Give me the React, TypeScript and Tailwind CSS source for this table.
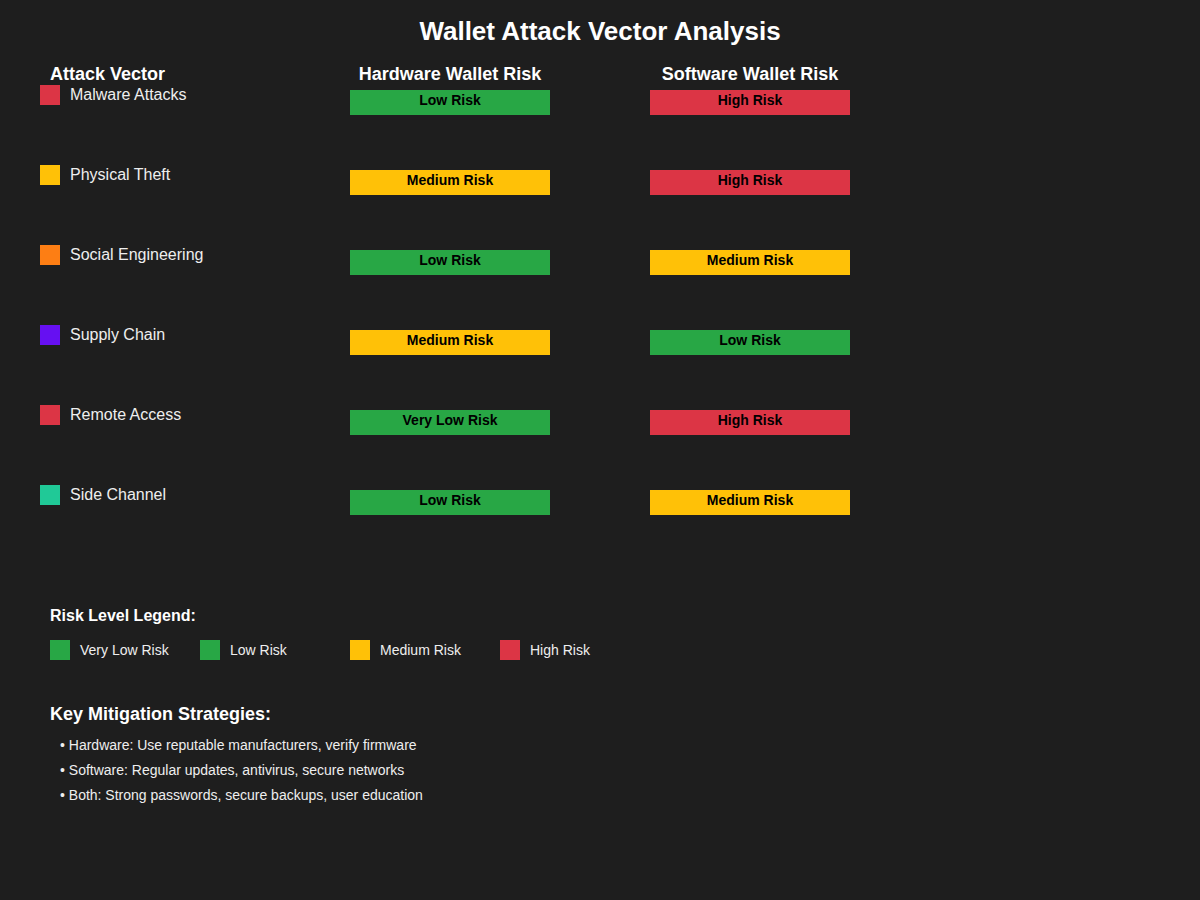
import React from 'react';

type Level = 'Very Low Risk' | 'Low Risk' | 'Medium Risk' | 'High Risk';

const levelBg: Record<Level, string> = {
  'Very Low Risk': 'bg-[#28a745]',
  'Low Risk': 'bg-[#28a745]',
  'Medium Risk': 'bg-[#ffc107]',
  'High Risk': 'bg-[#dc3545]',
};

const vectors: { name: string; color: string; hw: Level; sw: Level }[] = [
  { name: 'Malware Attacks', color: 'bg-[#dc3545]', hw: 'Low Risk', sw: 'High Risk' },
  { name: 'Physical Theft', color: 'bg-[#ffc107]', hw: 'Medium Risk', sw: 'High Risk' },
  { name: 'Social Engineering', color: 'bg-[#fd7e14]', hw: 'Low Risk', sw: 'Medium Risk' },
  { name: 'Supply Chain', color: 'bg-[#6610f2]', hw: 'Medium Risk', sw: 'Low Risk' },
  { name: 'Remote Access', color: 'bg-[#dc3545]', hw: 'Very Low Risk', sw: 'High Risk' },
  { name: 'Side Channel', color: 'bg-[#20c997]', hw: 'Low Risk', sw: 'Medium Risk' },
];

const legend: Level[] = ['Very Low Risk', 'Low Risk', 'Medium Risk', 'High Risk'];

const strategies = [
  '• Hardware: Use reputable manufacturers, verify firmware',
  '• Software: Regular updates, antivirus, secure networks',
  '• Both: Strong passwords, secure backups, user education',
];

const RiskBar: React.FC<{ level: Level }> = ({ level }) => (
  <div className={`mt-[5px] w-[200px] h-[25px] pt-[2px] text-center text-[14px] leading-[16px] font-bold text-black ${levelBg[level]}`}>
    {level}
  </div>
);

const App: React.FC = () => {
  return (
    <div className="min-h-[900px] w-[1200px] bg-[#1e1e1e] text-[#f0f0f0] font-['Liberation_Sans',Arial,sans-serif]">
      <h1 className="pt-[15px] text-center text-[26px] leading-[32px] font-bold text-white">
        Wallet Attack Vector Analysis
      </h1>

      <div className="px-[40px] mt-[17px]">
        {/* column headers */}
        <div className="flex h-[21px] text-[18px] leading-[20px] font-bold text-white">
          <div className="w-[310px] pl-[10px]">Attack Vector</div>
          <div className="w-[200px] text-center whitespace-nowrap">Hardware Wallet Risk</div>
          <div className="w-[100px]" />
          <div className="w-[200px] text-center whitespace-nowrap">Software Wallet Risk</div>
        </div>

        {vectors.map((v) => (
          <div key={v.name} className="flex items-start h-[80px]">
            <div className="w-[310px] h-[20px] flex items-center gap-[10px]">
              <span className={`w-[20px] h-[20px] ${v.color}`} />
              <span className="text-[16px] leading-[20px] text-[#eeeeee]">{v.name}</span>
            </div>
            <RiskBar level={v.hw} />
            <div className="w-[100px]" />
            <RiskBar level={v.sw} />
          </div>
        ))}
      </div>

      <div className="px-[50px] mt-[41px]">
        <h2 className="text-[16px] leading-[20px] font-bold text-white">
          Risk Level Legend:
        </h2>
        <div className="flex mt-[14px]">
          {legend.map((l) => (
            <div key={l} className="w-[150px] flex items-center gap-[10px]">
              <span className={`w-[20px] h-[20px] ${levelBg[l]}`} />
              <span className="text-[14px] leading-[20px] text-[#eeeeee]">{l}</span>
            </div>
          ))}
        </div>

        <h2 className="mt-[43px] text-[18px] leading-[22px] font-bold text-white">
          Key Mitigation Strategies:
        </h2>
        <ul className="mt-[8px] pl-[10px]">
          {strategies.map((s) => (
            <li key={s} className="text-[14px] leading-[25px] text-[#eeeeee]">{s}</li>
          ))}
        </ul>
      </div>
    </div>
  );
};

export default App;
